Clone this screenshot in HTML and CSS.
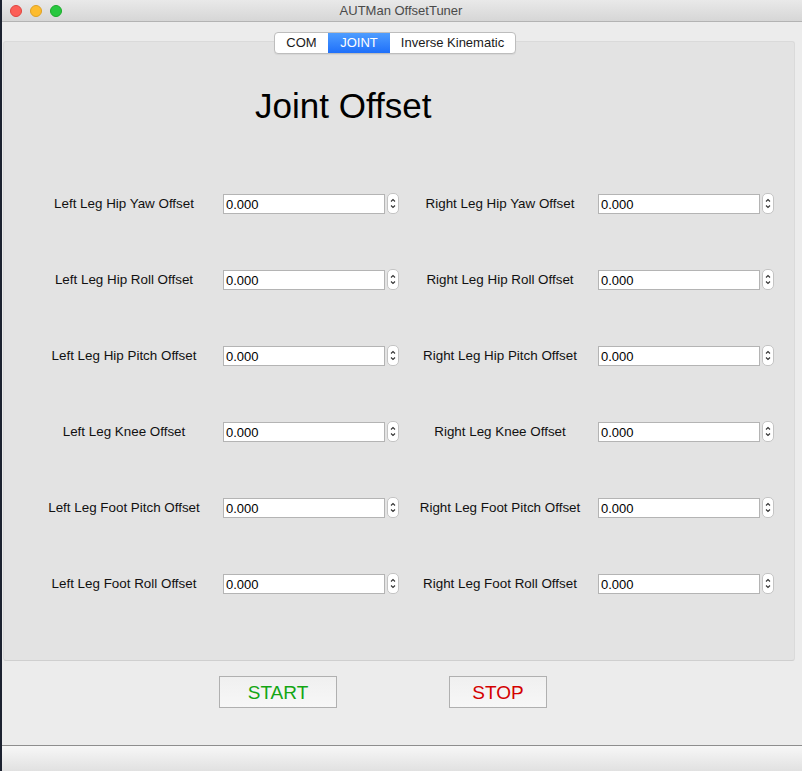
FILE: index.html
```html
<!DOCTYPE html>
<html>
<head>
<meta charset="utf-8">
<link rel="stylesheet" href="styles.css">
</head>
<body>
<div class="window">
  <div class="titlebar">
    <div class="lights">
      <span class="light red"></span>
      <span class="light yellow"></span>
      <span class="light green"></span>
    </div>
    <div class="title">AUTMan OffsetTuner</div>
  </div>
  <div class="content">
    <div class="tabs">
      <div class="tab">COM</div>
      <div class="tab active">JOINT</div>
      <div class="tab">Inverse Kinematic</div>
    </div>
    <div class="pane">
      <h1 class="heading">Joint Offset</h1>
      <div class="form">
        <div class="row">
          <div class="field left"><span class="label">Left Leg Hip Yaw Offset</span><span class="input">0.000</span><span class="spin"><svg viewBox="0 0 12 21" width="12" height="21"><path d="M4 8.5 L6 6.5 L8 8.5 M4 12.5 L6 14.5 L8 12.5" fill="none" stroke="#333" stroke-width="1.1"/></svg></span></div>
          <div class="field right"><span class="label">Right Leg Hip Yaw Offset</span><span class="input">0.000</span><span class="spin"><svg viewBox="0 0 12 21" width="12" height="21"><path d="M4 8.5 L6 6.5 L8 8.5 M4 12.5 L6 14.5 L8 12.5" fill="none" stroke="#333" stroke-width="1.1"/></svg></span></div>
        </div>
        <div class="row">
          <div class="field left"><span class="label">Left Leg Hip Roll Offset</span><span class="input">0.000</span><span class="spin"><svg viewBox="0 0 12 21" width="12" height="21"><path d="M4 8.5 L6 6.5 L8 8.5 M4 12.5 L6 14.5 L8 12.5" fill="none" stroke="#333" stroke-width="1.1"/></svg></span></div>
          <div class="field right"><span class="label">Right Leg Hip Roll Offset</span><span class="input">0.000</span><span class="spin"><svg viewBox="0 0 12 21" width="12" height="21"><path d="M4 8.5 L6 6.5 L8 8.5 M4 12.5 L6 14.5 L8 12.5" fill="none" stroke="#333" stroke-width="1.1"/></svg></span></div>
        </div>
        <div class="row">
          <div class="field left"><span class="label">Left Leg Hip Pitch Offset</span><span class="input">0.000</span><span class="spin"><svg viewBox="0 0 12 21" width="12" height="21"><path d="M4 8.5 L6 6.5 L8 8.5 M4 12.5 L6 14.5 L8 12.5" fill="none" stroke="#333" stroke-width="1.1"/></svg></span></div>
          <div class="field right"><span class="label">Right Leg Hip Pitch Offset</span><span class="input">0.000</span><span class="spin"><svg viewBox="0 0 12 21" width="12" height="21"><path d="M4 8.5 L6 6.5 L8 8.5 M4 12.5 L6 14.5 L8 12.5" fill="none" stroke="#333" stroke-width="1.1"/></svg></span></div>
        </div>
        <div class="row">
          <div class="field left"><span class="label">Left Leg Knee Offset</span><span class="input">0.000</span><span class="spin"><svg viewBox="0 0 12 21" width="12" height="21"><path d="M4 8.5 L6 6.5 L8 8.5 M4 12.5 L6 14.5 L8 12.5" fill="none" stroke="#333" stroke-width="1.1"/></svg></span></div>
          <div class="field right"><span class="label">Right Leg Knee Offset</span><span class="input">0.000</span><span class="spin"><svg viewBox="0 0 12 21" width="12" height="21"><path d="M4 8.5 L6 6.5 L8 8.5 M4 12.5 L6 14.5 L8 12.5" fill="none" stroke="#333" stroke-width="1.1"/></svg></span></div>
        </div>
        <div class="row">
          <div class="field left"><span class="label">Left Leg Foot Pitch Offset</span><span class="input">0.000</span><span class="spin"><svg viewBox="0 0 12 21" width="12" height="21"><path d="M4 8.5 L6 6.5 L8 8.5 M4 12.5 L6 14.5 L8 12.5" fill="none" stroke="#333" stroke-width="1.1"/></svg></span></div>
          <div class="field right"><span class="label">Right Leg Foot Pitch Offset</span><span class="input">0.000</span><span class="spin"><svg viewBox="0 0 12 21" width="12" height="21"><path d="M4 8.5 L6 6.5 L8 8.5 M4 12.5 L6 14.5 L8 12.5" fill="none" stroke="#333" stroke-width="1.1"/></svg></span></div>
        </div>
        <div class="row">
          <div class="field left"><span class="label">Left Leg Foot Roll Offset</span><span class="input">0.000</span><span class="spin"><svg viewBox="0 0 12 21" width="12" height="21"><path d="M4 8.5 L6 6.5 L8 8.5 M4 12.5 L6 14.5 L8 12.5" fill="none" stroke="#333" stroke-width="1.1"/></svg></span></div>
          <div class="field right"><span class="label">Right Leg Foot Roll Offset</span><span class="input">0.000</span><span class="spin"><svg viewBox="0 0 12 21" width="12" height="21"><path d="M4 8.5 L6 6.5 L8 8.5 M4 12.5 L6 14.5 L8 12.5" fill="none" stroke="#333" stroke-width="1.1"/></svg></span></div>
        </div>
      </div>
    </div>
    <div class="buttons">
      <button class="btn start">START</button>
      <button class="btn stop">STOP</button>
    </div>
  </div>
  <div class="statusbar"></div>
</div>
</body>
</html>
```
FILE: styles.css
```css
html, body {
  margin: 0;
  padding: 0;
}
body {
  background: #1c2230;
  width: 802px;
  height: 771px;
  overflow: hidden;
  font-family: "Liberation Sans", Arial, sans-serif;
}
.window {
  margin-left: 2px;
  width: 800px;
  height: 771px;
  background: #ececec;
  display: flex;
  flex-direction: column;
}
.titlebar {
  height: 21px;
  flex: none;
  border-bottom: 1px solid #b3b3b3;
  background: linear-gradient(#e9e9e9, #d6d6d6);
  display: flex;
  align-items: center;
  justify-content: center;
  position: relative;
}
.lights {
  position: absolute;
  left: 8px;
  top: 5px;
  display: flex;
  gap: 8px;
}
.light {
  width: 12px;
  height: 12px;
  border-radius: 50%;
  box-sizing: border-box;
}
.red { background: #fc5f57; border: 1px solid #e0443e; }
.yellow { background: #fdbc2e; border: 1px solid #dea123; }
.green { background: #28c840; border: 1px solid #1aab29; }
.title {
  font-size: 13px;
  color: #4a4a4a;
  margin-left: -2px;
}
.content {
  flex: 1;
  display: flex;
  flex-direction: column;
  position: relative;
}
.tabs {
  position: absolute;
  top: 10px;
  left: 272px;
  display: flex;
  height: 20px;
  border: 1px solid #bdbdbd;
  border-radius: 4px;
  background: #fff;
  overflow: hidden;
  z-index: 2;
  box-shadow: 0 1px 1px rgba(0,0,0,0.06);
}
.tab {
  font-size: 13px;
  line-height: 20px;
  color: #1a1a1a;
  padding: 0 10px;
}
.tab:first-child { width: 53px; box-sizing: border-box; text-align: center; }
.tab.active {
  width: 62px;
  box-sizing: border-box;
  text-align: center;
  color: #fff;
  background: linear-gradient(#4e9dff, #1f70fa);
}
.tab:last-child { width: 125px; box-sizing: border-box; text-align: center; }
.pane {
  margin: 19px 7px 0 1px;
  height: 620px;
  flex: none;
  box-sizing: border-box;
  background: #e3e3e3;
  border: 1px solid #dadada;
  border-bottom: 1px solid #cfcfcf;
  border-radius: 3px;
}
.heading {
  margin: 0;
  font-weight: normal;
  font-size: 35px;
  line-height: 40px;
  color: #000;
  padding: 44px 0 0 251px;
  height: 40px;
}
.form {
  margin-top: 67px;
  padding-left: 36px;
  display: flex;
  flex-direction: column;
  gap: 55px;
}
.row {
  display: flex;
  gap: 12px;
  height: 21px;
}
.field {
  display: flex;
  align-items: center;
}
.label {
  font-size: 13.4px;
  color: #111;
  text-align: center;
  white-space: nowrap;
}
.left .label { width: 168px; margin-right: 15px; }
.right .label { width: 178px; margin-right: 9px; }
.input {
  width: 162px;
  height: 20px;
  box-sizing: border-box;
  background: #fff;
  border: 1px solid #b4b4b4;
  font-size: 13px;
  line-height: 18px;
  padding-left: 2px;
  padding-top: 1px;
  color: #000;
}
.spin {
  margin-left: 2px;
  width: 12px;
  height: 21px;
  box-sizing: border-box;
  background: #fff;
  border: 1px solid #c4c4c4;
  border-radius: 5px;
  display: flex;
  align-items: center;
  justify-content: center;
  overflow: hidden;
}
.spin svg { display: block; flex: none; }
.buttons {
  display: flex;
  margin-top: 15px;
  padding-left: 217px;
  gap: 112px;
}
.btn {
  height: 32px;
  box-sizing: border-box;
  border: 1px solid #b0b0b0;
  background: linear-gradient(#f0f0f0, #f7f7f7);
  font-family: "Liberation Sans", Arial, sans-serif;
  font-size: 19px;
  padding: 2px 0 0;
  margin: 0;
  border-radius: 0;
}
.start { width: 118px; color: #13a613; }
.stop { width: 98px; color: #d40000; }
.statusbar {
  height: 25px;
  flex: none;
  border-top: 1px solid #8e8e8e;
  background: linear-gradient(#f7f7f7, #e1e1e1);
}
```
